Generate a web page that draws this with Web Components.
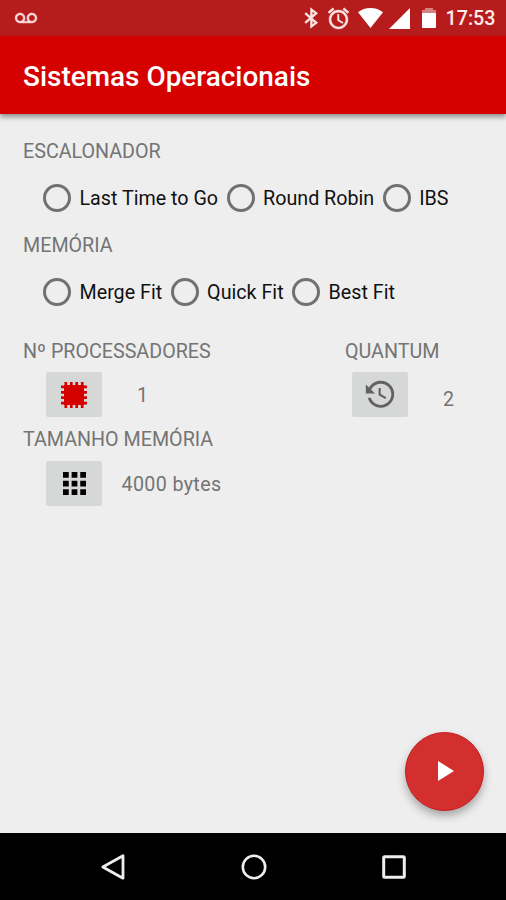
<!DOCTYPE html>
<html lang="pt">
<head>
<meta charset="utf-8">
<title>Sistemas Operacionais</title>
<style>
    html, body {
        margin: 0;
        height: 100%;
        overflow: hidden;
    }
    body {
        font-family: Roboto, sans-serif;
    }
</style>
</head>
<body>
<os-app></os-app>

<script>
(function() {
    "use strict";

    // Every icon has its own viewBox, cropped to the size it is drawn at.
    const icons = {
        voicemail: { box: "0 6 24 11", w: 22, h: 10, body: '<path stroke="currentColor" stroke-width=".5" d="M18.5 6C15.46 6 13 8.46 13 11.5c0 1.33.47 2.55 1.26 3.5H9.74c.79-.95 1.26-2.17 1.26-3.5C11 8.46 8.54 6 5.5 6S0 8.46 0 11.5 2.46 17 5.5 17h13c3.04 0 5.5-2.46 5.5-5.5S21.54 6 18.5 6zm-13 9C3.57 15 2 13.43 2 11.5S3.57 8 5.5 8 9 9.57 9 11.5 7.43 15 5.5 15zm13 0c-1.93 0-3.5-1.57-3.5-3.5S16.57 8 18.5 8 22 9.57 22 11.5 20.43 15 18.5 15z"/>' },
        bluetooth: { box: "0 0 14 20", w: 14, h: 20, body: '<path d="M1.2 5.2 12.2 14.8 7.4 18.5V1.5L12.2 5.2 1.2 14.8" fill="none" stroke="currentColor" stroke-width="2.3"/>' },
        alarm: { box: "2 2 20 20", w: 21, h: 21, body: '<path stroke="currentColor" stroke-width=".4" d="M22 5.72l-4.6-3.86-1.29 1.53 4.6 3.86L22 5.72zM7.88 3.39L6.6 1.86 2 5.71l1.29 1.53 4.59-3.85zM12.5 8H11v6l4.75 2.85.75-1.23-4-2.37V8zM12 4c-4.97 0-9 4.03-9 9s4.02 9 9 9c4.97 0 9-4.03 9-9s-4.03-9-9-9zm0 16c-3.87 0-7-3.13-7-7s3.13-7 7-7 7 3.13 7 7-3.13 7-7 7z"/>' },
        wifi: { box: "0 0 25 20", w: 25, h: 20, body: '<path d="M12.5 20 0 4.2C3.4 1.5 7.7 0 12.5 0S21.6 1.5 25 4.2z"/>' },
        signal: { box: "0 0 21 21", w: 21, h: 21, body: '<path d="M0 21H21V0z"/>' },
        battery: { box: "0 0 14 20", w: 14, h: 20, body: '<path d="M3 0h8v2h3v3H0V2h3z" opacity=".45"/><path d="M0 5h14v14q0 1-1 1H1q-1 0-1-1z"/>' },
        chip: { box: "0 0 26 26", w: 26, h: 26, body: '<path d="M3 3H23V23H3z"/><path d="M4.8 0V26M10.3 0V26M15.7 0V26M21.2 0V26M0 4.8H26M0 10.3H26M0 15.7H26M0 21.2H26" stroke="currentColor" stroke-width="2.7"/>' },
        history: { box: "0 0 24 24", w: 34, h: 34, body: '<path d="M11,7V12.11L15.71,14.9L16.5,13.62L12.5,11.25V7M12.5,2C8.97,2 5.91,3.92 4.27,6.77L2,4.5V11H8.5L5.75,8.25C6.96,5.73 9.5,4 12.5,4A7.5,7.5 0 0,1 20,11.5A7.5,7.5 0 0,1 12.5,19C9.23,19 6.47,16.91 5.44,14H3.34C4.44,18.03 8.11,21 12.5,21C17.74,21 22,16.75 22,11.5A9.5,9.5 0 0,0 12.5,2Z"/>' },
        grid: { box: "4 4 16 16", w: 23, h: 23, body: '<path d="M4 8h4V4H4v4zm6 12h4v-4h-4v4zm-6 0h4v-4H4v4zm0-6h4v-4H4v4zm6 0h4v-4h-4v4zm6-10v4h4V4h-4zm-6 4h4V4h-4v4zm6 6h4v-4h-4v4zm0 6h4v-4h-4v4z"/>' },
        play: { box: "0 0 16 20", w: 16, h: 20, body: '<path d="M0 0V20L16 10z"/>' },
        back: { box: "0 0 26 28", w: 26, h: 28, body: '<path d="M2.8 14 23 2.8V25.2z" fill="none" stroke="currentColor" stroke-width="2.8" stroke-linejoin="round"/>' },
        home: { box: "0 0 26 26", w: 26, h: 26, body: '<circle cx="13" cy="13" r="11.2" fill="none" stroke="currentColor" stroke-width="2.6"/>' },
        recent: { box: "0 0 24 24", w: 24, h: 24, body: '<rect x="1.7" y="1.7" width="20.6" height="20.6" rx="1" fill="none" stroke="currentColor" stroke-width="3"/>' }
    };

    class OsIcon extends HTMLElement {
        connectedCallback() {
            const icon = icons[this.getAttribute("name")];
            this.attachShadow({mode: 'open'}).innerHTML = `
                <style>
                    :host { display: block; flex: none; }
                    svg { display: block; fill: currentColor; overflow: visible; }
                </style>
                <svg width="${icon.w}" height="${icon.h}" viewBox="${icon.box}">${icon.body}</svg>
            `;
        }
    }

    // Registers an element whose shadow root is just a fixed template.
    function define(name, template) {
        window.customElements.define(name, class extends HTMLElement {
            constructor() {
                super();
                this.attachShadow({mode: 'open'}).innerHTML = template;
            }
        });
    }

    window.customElements.define('os-icon', OsIcon);

    define('status-bar', `
        <style>
            :host {
                display: flex;
                align-items: center;
                box-sizing: border-box;
                height: 36px;
                padding: 0 10.5px 0 15px;
                background: #b71c1c;
                color: #fff;
                font-size: 19.7px;
                font-weight: 500;
            }
            .voicemail { margin-right: auto; color: #fbdcdc; }
            .bluetooth { margin-right: 10.5px; color: #fbe4e4; }
            .alarm { margin-right: 9px; color: #fbe4e4; }
            .wifi { margin-right: 5.5px; }
            .signal { margin-right: 12px; }
            .battery { margin-right: 10px; }
            .time { line-height: 36px; padding-top: 2px; color: #fdeaea; }
        </style>
        <os-icon class="voicemail" name="voicemail"></os-icon>
        <os-icon class="bluetooth" name="bluetooth"></os-icon>
        <os-icon class="alarm" name="alarm"></os-icon>
        <os-icon class="wifi" name="wifi"></os-icon>
        <os-icon class="signal" name="signal"></os-icon>
        <os-icon class="battery" name="battery"></os-icon>
        <span class="time"><slot></slot></span>
    `);

    define('app-bar', `
        <style>
            :host {
                display: flex;
                align-items: center;
                box-sizing: border-box;
                height: 78px;
                padding: 3px 23px 0;
                background: #d50000;
                color: #fff;
                font-size: 27.95px;
                font-weight: 500;
                box-shadow: 0 3px 5px rgba(0, 0, 0, .4);
            }
        </style>
        <slot></slot>
    `);

    define('section-label', `
        <style>
            :host {
                display: block;
                height: 26px;
                line-height: 26px;
                font-size: 19.7px;
                color: #747474;
                white-space: nowrap;
            }
        </style>
        <slot></slot>
    `);

    define('radio-row', `
        <style>
            :host { display: flex; padding-left: 11.5px; }
        </style>
        <slot></slot>
    `);

    define('radio-option', `
        <style>
            :host {
                display: flex;
                align-items: center;
                height: 45px;
                font-size: 19.7px;
                color: #111;
                white-space: nowrap;
            }
            .ring {
                box-sizing: border-box;
                flex: none;
                width: 28px;
                height: 28px;
                margin: 0 8.5px;
                border: 3px solid #717171;
                border-radius: 50%;
            }
            .text { padding-top: 2px; }
        </style>
        <span class="ring"></span>
        <span class="text"><slot></slot></span>
    `);

    define('icon-button', `
        <style>
            :host {
                display: flex;
                align-items: center;
                justify-content: center;
                flex: none;
                width: 56px;
                height: 45px;
                border-radius: 2px;
                background: #d6d8d7;
            }
        </style>
        <slot></slot>
    `);

    define('value-row', `
        <style>
            :host {
                display: flex;
                align-items: center;
                height: 45px;
                font-size: 19.7px;
                letter-spacing: .35px;
                color: #747474;
            }
        </style>
        <slot></slot>
    `);

    define('play-button', `
        <style>
            :host {
                position: absolute;
                right: 22px;
                bottom: 22.5px;
                display: flex;
                align-items: center;
                justify-content: center;
                box-sizing: border-box;
                width: 79px;
                height: 79px;
                padding-left: 3px;
                border: 1px solid #c9181c;
                border-radius: 50%;
                background: #d32f2f;
                color: #fff;
                box-shadow: 0 5px 8px rgba(0, 0, 0, .3);
            }
        </style>
        <os-icon name="play"></os-icon>
    `);

    define('nav-bar', `
        <style>
            :host {
                display: flex;
                align-items: center;
                justify-content: space-between;
                box-sizing: border-box;
                height: 67px;
                padding: 0 100px;
                background: #000;
                color: #eee;
            }
        </style>
        <os-icon name="back"></os-icon>
        <os-icon name="home"></os-icon>
        <os-icon name="recent"></os-icon>
    `);

    define('os-app', `
        <style>
            :host {
                display: flex;
                flex-direction: column;
                width: 506px;
                height: 900px;
                background: #eee;
            }
            app-bar { position: relative; z-index: 1; }
            main {
                position: relative;
                flex: 1;
                padding: 25px 23px 0;
            }
            radio-row { margin: 10px 0 13px; }
            .columns {
                display: flex;
                justify-content: space-between;
                margin-top: 25px;
            }
            .quantum { width: 138px; }
            value-row { margin-top: 7px; padding-left: 23px; }
            .quantum value-row { padding-left: 7px; }
            .number, .bytes { padding-top: 2px; }
            .quantum .number { margin: 8px 0 0 35px; }
            .processors .number { margin-left: 35px; }
            .memory { margin-top: 10px; }
            .memory value-row { margin-top: 8px; }
            .bytes { margin-left: 19.5px; }
            .red { color: #d50000; }
            .gray { color: #616161; }
            .black { color: #000; }
        </style>
        <status-bar>17:53</status-bar>
        <app-bar>Sistemas Operacionais</app-bar>
        <main>
            <section-label>ESCALONADOR</section-label>
            <radio-row>
                <radio-option>Last Time to Go</radio-option>
                <radio-option>Round Robin</radio-option>
                <radio-option>IBS</radio-option>
            </radio-row>
            <section-label>MEMÓRIA</section-label>
            <radio-row>
                <radio-option>Merge Fit</radio-option>
                <radio-option>Quick Fit</radio-option>
                <radio-option>Best Fit</radio-option>
            </radio-row>
            <div class="columns">
                <div class="processors">
                    <section-label>Nº PROCESSADORES</section-label>
                    <value-row>
                        <icon-button><os-icon class="red" name="chip"></os-icon></icon-button>
                        <span class="number">1</span>
                    </value-row>
                </div>
                <div class="quantum">
                    <section-label>QUANTUM</section-label>
                    <value-row>
                        <icon-button><os-icon class="gray" name="history"></os-icon></icon-button>
                        <span class="number">2</span>
                    </value-row>
                </div>
            </div>
            <div class="memory">
                <section-label>TAMANHO MEMÓRIA</section-label>
                <value-row>
                    <icon-button><os-icon class="black" name="grid"></os-icon></icon-button>
                    <span class="bytes">4000 bytes</span>
                </value-row>
            </div>
            <play-button></play-button>
        </main>
        <nav-bar></nav-bar>
    `);
})();
</script>
</body>
</html>
